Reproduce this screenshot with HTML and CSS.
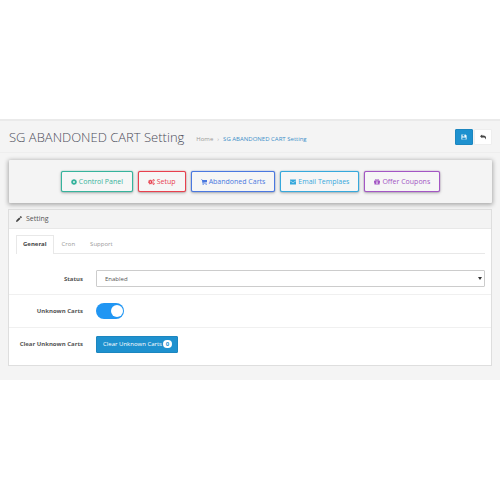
FILE: index.html
```html
<!DOCTYPE html>
<html lang="en">
<head>
    <meta charset="UTF-8">
    <meta name="viewport" content="width=device-width, initial-scale=1.0">
    <title>SG ABANDONED CART Setting</title>
    <link rel="stylesheet" href="styles.css">
</head>
<body>
    <div id="content">
        <header class="page-header">
            <h1>SG ABANDONED CART Setting</h1>
            <nav class="breadcrumb">
                <a href="#">Home</a>
                <span class="separator">›</span>
                <a href="#" class="current">SG ABANDONED CART Setting</a>
            </nav>
            <div class="header-buttons">
                <button type="submit" form="form-setting" class="btn btn-save" aria-label="Save">
                    <svg viewBox="0 0 14 14"><path fill="currentColor" fill-rule="evenodd" d="M1 1h9.500l2.500 2.500V13H1zM3 8v4h8V8zM3.500 2v4h6V2zM7 2.500h1.500v2.500H7z"/></svg>
                </button>
                <a href="#" class="btn btn-back" aria-label="Cancel">
                    <svg viewBox="0 0 14 14"><path fill="currentColor" d="M0 5.500L5 1v2.700h3c4 0 6 2.300 6 5 0 1.600-.6 3-1.500 4.300.3-3.500-1-5-4.500-5H5V10z"/></svg>
                </a>
            </div>
        </header>

        <nav class="menu-bar">
            <a href="#" class="menu-link green">
                <svg viewBox="0 0 14 14"><path fill="currentColor" fill-rule="evenodd" d="M5.800 0h2.400l.4 1.900 1 .4 1.700-1.100 1.600 1.600-1.100 1.700.4 1 1.800.4v2.300l-1.800.4-.4 1 1.100 1.700-1.600 1.600-1.700-1.100-1 .4-.4 1.800H5.800l-.4-1.800-1-.4-1.700 1.100-1.600-1.600 1.100-1.700-.4-1L0 8.200V5.900l1.800-.4.4-1-1.100-1.700 1.600-1.600 1.700 1.100 1-.4zM7 4.900a2.100 2.100 0 1 0 0 4.200 2.100 2.100 0 0 0 0-4.200z"/></svg>
                Control Panel
            </a>
            <a href="#" class="menu-link red">
                <svg viewBox="0 0 16 14"><g fill="none" stroke="currentColor"><circle cx="5.500" cy="7" r="3" stroke-width="3"/><circle cx="5.500" cy="7" r="4.800" stroke-width="1.600" stroke-dasharray="2.200 1.570"/><circle cx="13" cy="3" r="1.800" stroke-width="2"/><circle cx="13" cy="11" r="1.800" stroke-width="2"/></g></svg>
                Setup
            </a>
            <a href="#" class="menu-link blue">
                <svg viewBox="0 0 14 14"><path fill="currentColor" d="M0 1h2.800l.5 1.500H14v5L4.700 8.800l.2.900H13V11H3.800L2 2.300H0z"/><circle cx="5" cy="12.500" r="1.400" fill="currentColor"/><circle cx="12" cy="12.500" r="1.400" fill="currentColor"/></svg>
                Abandoned Carts
            </a>
            <a href="#" class="menu-link sky">
                <svg viewBox="0 0 14 14"><path fill="currentColor" d="M0 1h14v2.500L7 8.300 0 3.500zM0 4.600l7 4.800 7-4.800V13H0z"/></svg>
                Email Templaes
            </a>
            <a href="#" class="menu-link purple">
                <svg viewBox="0 0 14 14"><circle cx="4.500" cy="2.700" r="1.700" fill="none" stroke="currentColor" stroke-width="1.800"/><circle cx="9.500" cy="2.700" r="1.700" fill="none" stroke="currentColor" stroke-width="1.800"/><path fill="currentColor" fill-rule="evenodd" d="M0 4.200h14V8.500h-1V13H1V8.500H0zM5.800 5v6.500h2.400V5z"/></svg>
                Offer Coupons
            </a>
        </nav>

        <section class="panel">
            <div class="panel-heading">
                <svg viewBox="0 0 14 14"><path fill="currentColor" d="M0 14l1-4 6.500-6.500 3 3L4 13zM8.500 2.500L10.500.5q.7-.7 1.400 0l1.600 1.600q.7.700 0 1.400l-2 2z"/></svg>
                <h3>Setting</h3>
            </div>
            <div class="tabs">
                <a href="#" class="tab active">General</a>
                <a href="#" class="tab">Cron</a>
                <a href="#" class="tab">Support</a>
            </div>
            <form id="form-setting">
                <div class="form-group">
                    <label for="status">Status</label>
                    <div class="select-box">
                        <select id="status">
                            <option selected>Enabled</option>
                            <option>Disabled</option>
                        </select>
                    </div>
                </div>
                <div class="form-group">
                    <label for="unknown-carts">Unknown Carts</label>
                    <input type="checkbox" class="switch" id="unknown-carts" checked>
                </div>
                <div class="form-group">
                    <label for="clear-carts">Clear Unknown Carts</label>
                    <button type="button" class="btn-clear" id="clear-carts">Clear Unknown Carts <span class="badge">0</span></button>
                </div>
            </form>
        </section>
    </div>
</body>
</html>
```

FILE: styles.css
```css
:root {
    --primary-color: #1e91cf;
    --text-color: #555;
    --line: #e8e8e8;
}

* {
    margin: 0;
    padding: 0;
    box-sizing: border-box;
}

body {
    font-family: 'Open Sans', sans-serif;
    font-size: 6px;
    line-height: 8px;
    color: var(--text-color);
    background: #fff;
}

a {
    text-decoration: none;
}

button, select {
    font: inherit;
}

#content {
    margin-top: 119px;
    padding: 0 8px 14px;
    background: #f4f4f4;
    border-top: 2px solid #eaeaea;
}

.page-header {
    display: flex;
    align-items: center;
    height: 32px;
    margin: 0 -8px;
    padding: 0 8px 0 9px;
    border-bottom: 1px solid #eee;
}

h1 {
    font-size: 13px;
    font-weight: 300;
    line-height: 20px;
    color: #4c4d5a;
}

.breadcrumb {
    display: flex;
    gap: 4px;
    margin: 5px 0 0 12px;
    color: #aaa;
}

.breadcrumb a {
    color: #999;
}

.breadcrumb .current {
    color: #3d8fc9;
}

.header-buttons {
    display: flex;
    gap: 1px;
    margin-left: auto;
}

.btn {
    display: flex;
    align-items: center;
    justify-content: center;
    width: 18px;
    height: 16px;
    border: 1px solid transparent;
    border-radius: 1px;
}

.btn svg {
    width: 6px;
    height: 6px;
}

.btn-save {
    background: var(--primary-color);
    border-color: #1c86bf;
    color: #fff;
}

.btn-back {
    background: #fff;
    border-color: #eee;
    color: #444;
}

.menu-bar {
    display: flex;
    align-items: center;
    justify-content: center;
    gap: 5px;
    height: 43px;
    margin: 7px 0 6px 1px;
    border-radius: 1px;
    background: #f4f4f4;
    box-shadow: 0 1px 4px 1px rgba(0, 0, 0, 0.3);
}

.menu-link {
    display: flex;
    align-items: center;
    gap: 2px;
    height: 21px;
    padding: 0 9px;
    border: 1px solid currentColor;
    border-radius: 2px;
    background: #f6f6f6;
    box-shadow: 0 1px 3px rgba(0, 0, 0, 0.3), 0 0 1px currentColor;
    font-size: 7px;
    font-weight: 500;
    white-space: nowrap;
}

.menu-link svg {
    height: 6px;
}

.green {
    color: #36b39c;
}

.red {
    color: #e8404e;
}

.blue {
    color: #4a78e0;
}

.sky {
    color: #36a8dc;
}

.purple {
    color: #a356c4;
}

.panel {
    padding-bottom: 5px;
    background: #fff;
    border: 1px solid #dedede;
}

.panel-heading {
    display: flex;
    align-items: center;
    gap: 4px;
    height: 19px;
    padding: 0 7px;
    background: #f3f3f3;
    border-bottom: 1px solid var(--line);
}

.panel-heading svg {
    width: 6px;
    height: 6px;
    color: #444;
}

h3 {
    font-size: 7px;
    font-weight: 400;
}

.tabs {
    display: flex;
    gap: 1px;
    margin: 6px 6px 9px 7px;
    border-bottom: 1px solid var(--line);
}

.tab {
    padding: 4px 6px 5px;
    border: 1px solid transparent;
    border-bottom: 0;
    color: #999;
}

.tab.active {
    margin-bottom: -1px;
    background: #fff;
    border-color: var(--line);
    font-weight: 700;
    color: #444;
}

.form-group {
    display: flex;
    align-items: center;
    gap: 13px;
    padding: 7px 6px;
}

.form-group + .form-group {
    min-height: 33px;
    border-top: 1px solid #f0f0f0;
}

.form-group label {
    width: 68px;
    font-weight: 700;
    text-align: right;
    white-space: nowrap;
}

.select-box {
    position: relative;
    flex: 1;
}

.select-box::after {
    content: '';
    position: absolute;
    top: 7px;
    right: 3px;
    border: 2px solid transparent;
    border-top: 3px solid #333;
    border-bottom: 0;
}

select {
    display: block;
    width: 100%;
    height: 17px;
    padding: 0 8px;
    border: 1px solid #ccc;
    border-radius: 1px;
    background: #fff;
    color: var(--text-color);
    appearance: none;
}

.switch {
    display: flex;
    align-items: center;
    justify-content: flex-end;
    width: 28px;
    height: 16px;
    padding: 1px;
    border-radius: 8px;
    background: #ccc;
    appearance: none;
}

.switch:checked {
    background: #2196f3;
}

.switch::before {
    content: '';
    width: 12px;
    height: 12px;
    border-radius: 50%;
    background: #fff;
}

.switch:not(:checked) {
    justify-content: flex-start;
}

.btn-clear {
    display: flex;
    align-items: center;
    gap: 1px;
    height: 17px;
    padding: 0 5px 0 6px;
    border: 1px solid #1c86bf;
    border-radius: 1px;
    background: var(--primary-color);
    color: #fff;
}

.badge {
    min-width: 9px;
    border-radius: 4px;
    background: #fff;
    color: var(--primary-color);
    font-weight: 700;
    text-align: center;
}
```
